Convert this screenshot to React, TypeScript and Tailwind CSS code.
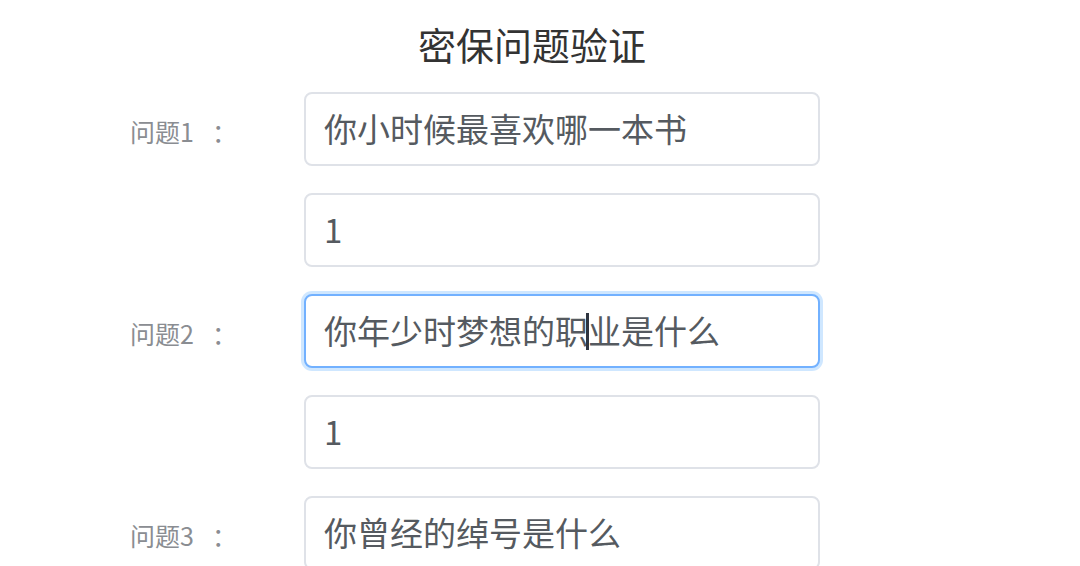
const rows = [
  { label: '问题1', value: '你小时候最喜欢哪一本书' },
  { label: '', value: '1' },
  { label: '问题2', value: '你年少时梦想的职业是什么', focused: true, caretAt: 8 },
  { label: '', value: '1' },
  { label: '问题3', value: '你曾经的绰号是什么' },
];

function Field({ value, focused, caretAt }: { value: string; focused?: boolean; caretAt?: number }) {
  const before = caretAt !== undefined ? value.slice(0, caretAt) : value;
  const after = caretAt !== undefined ? value.slice(caretAt) : '';
  return (
    <div
      className={
        focused
          ? 'flex items-center w-[516px] h-[74px] shrink-0 rounded-[8px] border-2 border-[#72b1ff] ring-[3px] ring-[#409eff]/25 pl-[18px] text-[33px] text-[#555a60] bg-white'
          : 'flex items-center w-[516px] h-[74px] shrink-0 rounded-[8px] border-2 border-[#dfe2e8] pl-[18px] text-[33px] text-[#555a60] bg-white'
      }
    >
      <span className="whitespace-nowrap">{before}</span>
      {caretAt !== undefined && <span className="inline-block w-[3px] h-[37px] bg-[#2f3540] -ml-[2px] -mr-[1px]" />}
      <span className="whitespace-nowrap">{after}</span>
    </div>
  );
}

export default function App() {
  return (
    <div
      className="w-[1080px] h-[566px] overflow-hidden bg-white"
      style={{ fontFamily: '"Noto Sans CJK SC", "Noto Sans", sans-serif' }}
    >
      <h1 className="pt-[20px] pr-[16px] text-center text-[38px] leading-[48px] text-[#333333]">密保问题验证</h1>
      <div className="flex flex-col gap-[27px] pt-[24px] pl-[130px]">
        {rows.map((r, i) => (
          <div key={i} className="flex items-center">
            <div className="w-[174px] shrink-0 pt-[6px] text-[25px] text-[#8a8d92]">
              {r.label && (
                <>
                  {r.label}
                  <span className="ml-[18px]">：</span>
                </>
              )}
            </div>
            <Field value={r.value} focused={r.focused} caretAt={r.caretAt} />
          </div>
        ))}
      </div>
    </div>
  );
}
